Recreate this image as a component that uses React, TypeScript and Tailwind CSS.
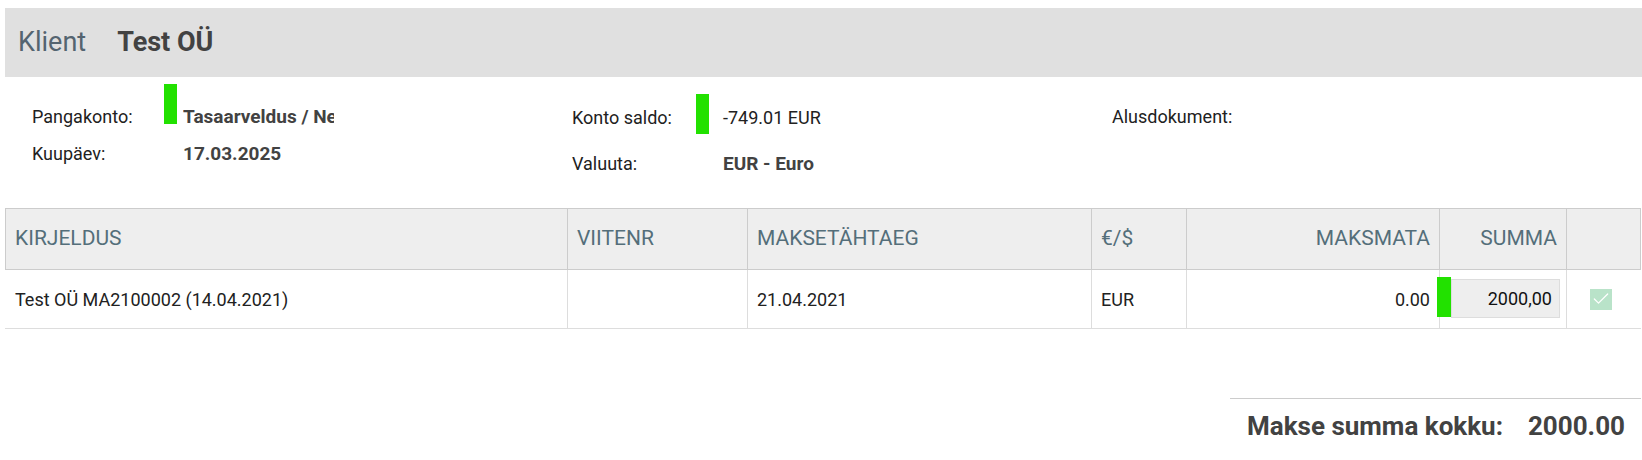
import { Check } from 'lucide-react';

const COLS = 'grid grid-cols-[562px_180px_344px_95px_253px_127px_1fr]';

function HeadCell({ children, right, last }: { children?: React.ReactNode; right?: boolean; last?: boolean }) {
  return (
    <div
      className={`flex items-center px-[9px] text-[21px] text-[#546e7a] ${right ? 'justify-end' : ''} ${last ? '' : 'border-r border-[#cccccc]'}`}>
      {children}
    </div>
  );
}

function Cell({ children, right, last }: { children?: React.ReactNode; right?: boolean; last?: boolean }) {
  return (
    <div
      className={`flex items-center px-[9px] text-[18px] text-[#212121] ${right ? 'justify-end' : ''} ${last ? '' : 'border-r border-[#dddddd]'}`}>
      {children}
    </div>
  );
}

export default function App() {
  return (
    <div className="w-[1642px] h-[460px] bg-white pl-[5px] pt-[8px] font-['Roboto',sans-serif] overflow-hidden">
      {/* client bar */}
      <div className="h-[69px] bg-[#e0e0e0] flex items-center pl-[13px] gap-[31px] text-[27px]">
        <span className="text-[#546470]">Klient</span>
        <span className="font-bold text-[#424242]">Test OÜ</span>
      </div>

      {/* info */}
      <div className="h-[131px] grid grid-cols-[540px_540px_1fr] pl-[27px] text-[18px] text-[#212121]">
        <div className="pt-[7px]">
          <div className="flex items-start h-[45px]">
            <span className="w-[132px] mt-[21px] leading-[24px]">Pangakonto:</span>
            <span className="w-[13px] h-[40px] bg-[#22e100]" />
            <span className="ml-[6px] mt-[21px] w-[151px] overflow-hidden whitespace-nowrap leading-[24px] text-[19px] font-bold text-[#424242]">
              Tasaarveldus / Netting
            </span>
          </div>
          <div className="flex items-center h-[24px] mt-[13px]">
            <span className="w-[151px] leading-[24px]">Kuupäev:</span>
            <span className="text-[19px] font-bold text-[#424242] leading-[24px]">17.03.2025</span>
          </div>
        </div>

        <div className="pt-[17px]">
          <div className="flex items-start h-[40px]">
            <span className="w-[124px] mt-[12px] leading-[24px]">Konto saldo:</span>
            <span className="w-[13px] h-[40px] bg-[#22e100]" />
            <span className="ml-[14px] mt-[12px] leading-[24px]">-749.01 EUR</span>
          </div>
          <div className="flex items-center h-[24px] mt-[18px]">
            <span className="w-[151px] leading-[24px]">Valuuta:</span>
            <span className="text-[19px] font-bold text-[#424242] leading-[24px]">EUR - Euro</span>
          </div>
        </div>

        <div className="pt-[26px]">
          <span className="leading-[24px]">Alusdokument:</span>
        </div>
      </div>

      {/* table */}
      <div className="w-[1636px]">
        <div className={`${COLS} h-[62px] bg-[#eeeeee] border border-[#cccccc]`}>
          <HeadCell>KIRJELDUS</HeadCell>
          <HeadCell>VIITENR</HeadCell>
          <HeadCell>MAKSETÄHTAEG</HeadCell>
          <HeadCell>€/$</HeadCell>
          <HeadCell right>MAKSMATA</HeadCell>
          <HeadCell right>SUMMA</HeadCell>
          <HeadCell last />
        </div>
        <div className={`${COLS} h-[59px] border-b border-[#dddddd] pl-px`}>
          <Cell>Test OÜ MA2100002 (14.04.2021)</Cell>
          <Cell />
          <Cell>21.04.2021</Cell>
          <Cell>EUR</Cell>
          <Cell right>0.00</Cell>
          <div className="flex items-start border-r border-[#dddddd]">
            <span className="w-[14px] h-[40px] mt-[7px] ml-[-3px] bg-[#22e100]" />
            <div className="mt-[9px] w-[109px] h-[39px] bg-[#eeeeee] border border-[#dddddd] flex items-center justify-end pr-[7px] text-[18px] text-[#111111]">
              2000,00
            </div>
          </div>
          <div className="flex items-center pl-[23px]">
            <span className="w-[22px] h-[21px] bg-[#b9e3c9] flex items-center justify-center">
              <Check className="w-[20px] h-[20px] text-white" strokeWidth={1.5} />
            </span>
          </div>
        </div>
      </div>

      {/* total */}
      <div className="ml-[1225px] w-[411px] mt-[69px] border-t border-[#cccccc] pt-[12px] pl-[17px] pr-[16px] flex justify-between text-[26px] leading-[31px] font-bold text-[#424242]">
        <span>Makse summa kokku:</span>
        <span>2000.00</span>
      </div>
    </div>
  );
}
